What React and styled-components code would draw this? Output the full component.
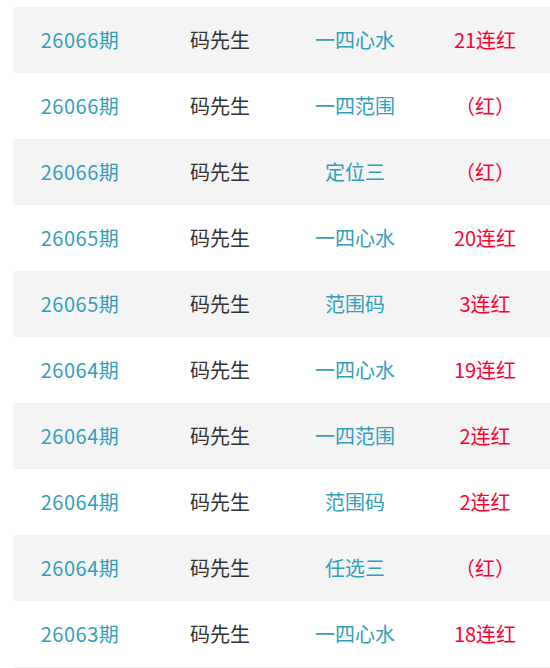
import React from 'react';
import styled, { createGlobalStyle } from 'styled-components';

const rows = [
  { issue: '26066期', tip: '一四心水', result: '21连红' },
  { issue: '26066期', tip: '一四范围', result: '（红）' },
  { issue: '26066期', tip: '定位三', result: '（红）' },
  { issue: '26065期', tip: '一四心水', result: '20连红' },
  { issue: '26065期', tip: '范围码', result: '3连红' },
  { issue: '26064期', tip: '一四心水', result: '19连红' },
  { issue: '26064期', tip: '一四范围', result: '2连红' },
  { issue: '26064期', tip: '范围码', result: '2连红' },
  { issue: '26064期', tip: '任选三', result: '（红）' },
  { issue: '26063期', tip: '一四心水', result: '18连红' },
];

function App() {
  return (
    <>
      <GlobalStyle />
      <Table>
        {rows.map((row, i) => (
          <Row key={i} striped={i % 2 === 0}>
            <Issue>{row.issue}</Issue>
            <Author>码先生</Author>
            <Tip>{row.tip}</Tip>
            <Result>{row.result}</Result>
          </Row>
        ))}
      </Table>
    </>
  );
}

export default App;

const GlobalStyle = createGlobalStyle`
  html, body {
    margin: 0;
    padding: 0;
    overflow: hidden;
    background: #fff;
  }
  body {
    font-family: "Noto Sans CJK SC", "Noto Sans", sans-serif;
  }
`;

const Table = styled.div`
  margin: 7px 0 0 13px;
  width: 540px;
  border-bottom: 1px solid #f4f4f4;
`;

const Row = styled.div`
  display: grid;
  grid-template-columns: 134px 146px 124px 136px;
  height: 66px;
  align-items: center;
  background-color: ${(p) => (p.striped ? '#f4f4f4' : '#fff')};
  font-size: 20px;
`;

const Cell = styled.div`
  text-align: center;
  white-space: nowrap;
  line-height: 66px;
`;

const Issue = styled(Cell)`
  color: #31a0bc;
  letter-spacing: 0.5px;
`;

const Author = styled(Cell)`
  color: #333;
`;

const Tip = styled(Cell)`
  color: #31a0bc;
`;

const Result = styled(Cell)`
  color: #ff0033;
`;
